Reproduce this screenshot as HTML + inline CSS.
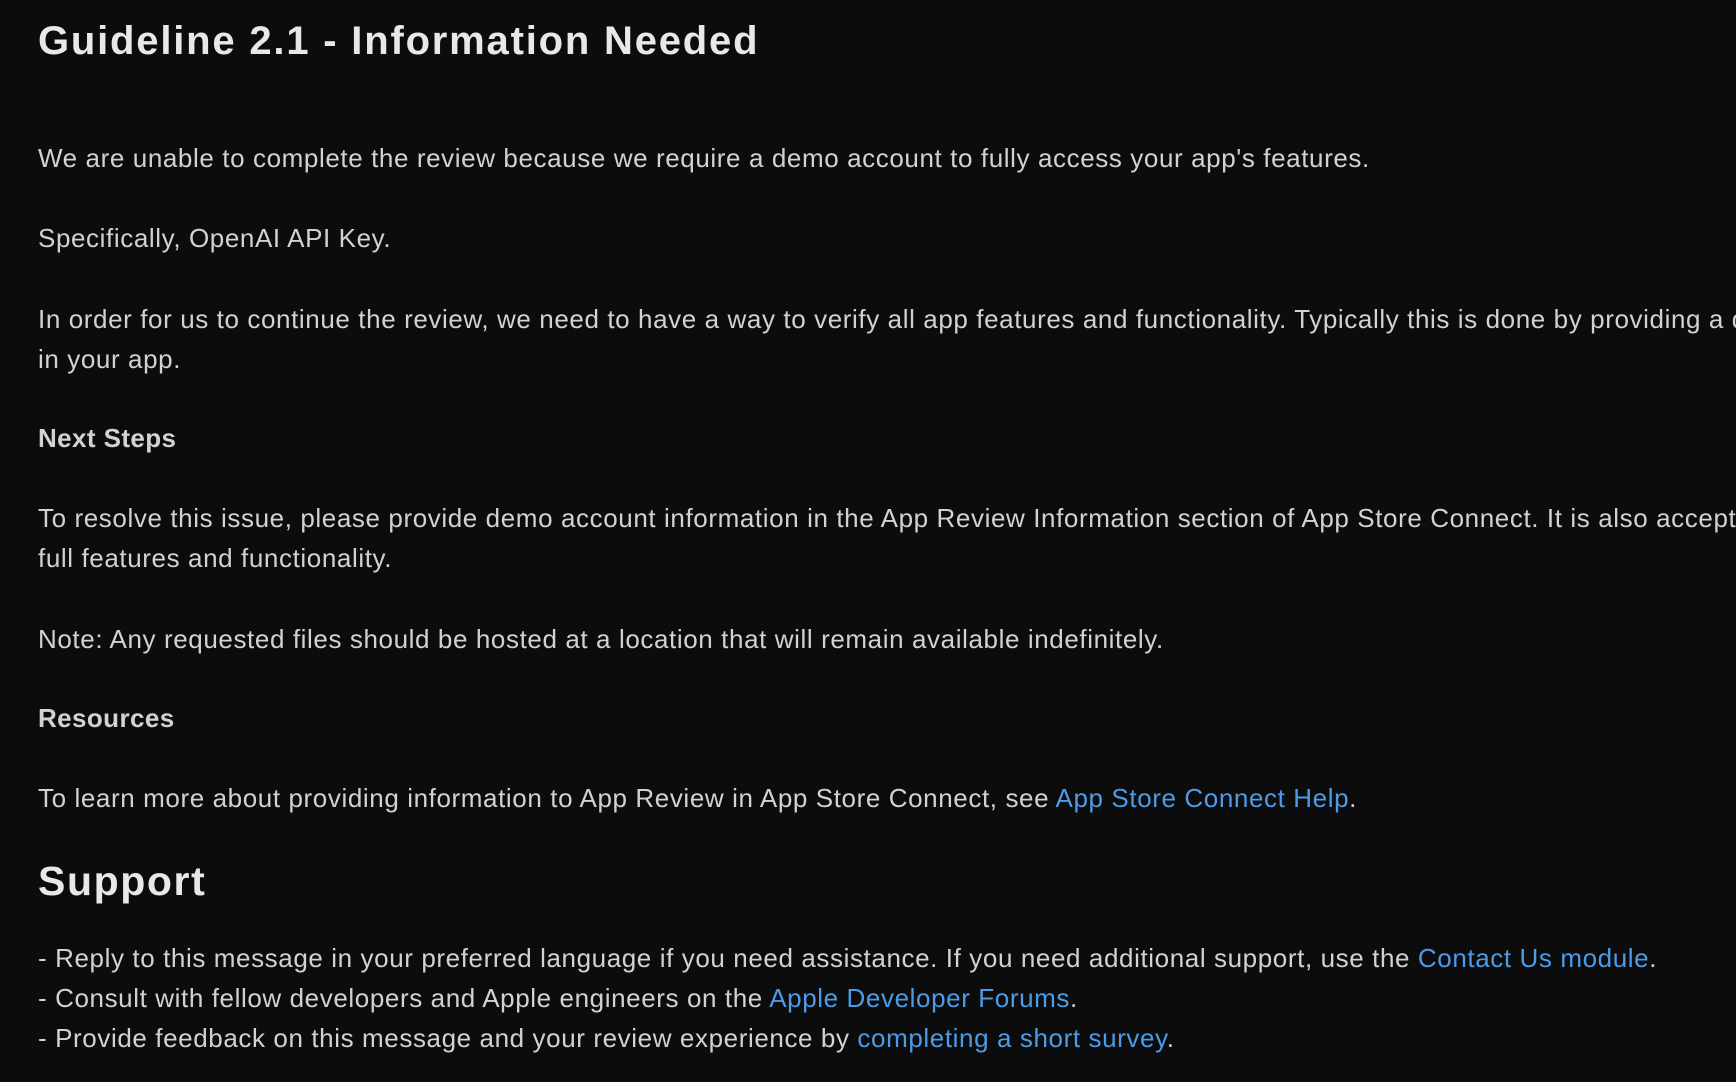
<!DOCTYPE html>
<html><head><meta charset="utf-8"><style>
html,body{margin:0;padding:0;width:1736px;height:1082px;overflow:hidden;background:#0c0c0c;}
body{font-family:"Liberation Sans",sans-serif;color:#d2d2d2;position:relative;}
.l{position:absolute;left:38px;white-space:nowrap;font-size:26px;line-height:40px;letter-spacing:0.6px;max-width:1698px;overflow:hidden;}
.h1{font-size:40px;font-weight:bold;color:#e8e8e8;letter-spacing:1.8px;}
.h2{font-size:41px;font-weight:bold;color:#e8e8e8;line-height:50px;letter-spacing:1.6px;}
.b{font-weight:bold;letter-spacing:0.4px;}
a{color:#4c9be8;text-decoration:none;}
</style></head><body>
<div class="l h1" style="top:21px">Guideline 2.1 - Information Needed</div>
<div class="l" style="top:138px">We are unable to complete the review because we require a demo account to fully access your app's features.</div>
<div class="l" style="top:218px">Specifically, OpenAI API Key.</div>
<div class="l" style="top:299px">In order for us to continue the review, we need to have a way to verify all app features and functionality. Typically this is done by providing a demo account</div>
<div class="l" style="top:339px">in your app.</div>
<div class="l b" style="top:418px">Next Steps</div>
<div class="l" style="top:498px">To resolve this issue, please provide demo account information in the App Review Information section of App Store Connect. It is also acceptable to include a</div>
<div class="l" style="top:538px">full features and functionality.</div>
<div class="l" style="top:619px">Note: Any requested files should be hosted at a location that will remain available indefinitely.</div>
<div class="l b" style="top:698px">Resources</div>
<div class="l" style="top:778px">To learn more about providing information to App Review in App Store Connect, see <a>App Store Connect Help</a>.</div>
<div class="l h2" style="top:856px">Support</div>
<div class="l" style="top:938px">- Reply to this message in your preferred language if you need assistance. If you need additional support, use the <a>Contact Us module</a>.</div>
<div class="l" style="top:978px">- Consult with fellow developers and Apple engineers on the <a>Apple Developer Forums</a>.</div>
<div class="l" style="top:1018px">- Provide feedback on this message and your review experience by <a>completing a short survey</a>.</div>
</body></html>
